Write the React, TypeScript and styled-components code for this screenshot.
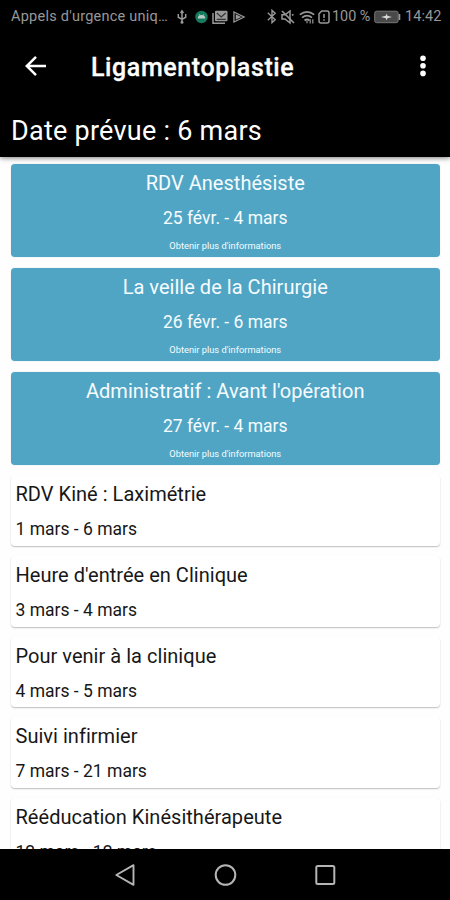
import React from "react";
import styled, { createGlobalStyle } from "styled-components";

const GlobalStyle = createGlobalStyle`
  * { box-sizing: border-box; }
  body { margin: 0; background: #000; font-family: Roboto, sans-serif; }
`;

const Screen = styled.main`
  width: 450px;
  height: 900px;
  display: flex;
  flex-direction: column;
  overflow: hidden;
  background: #fefefe;
`;

const StatusBar = styled.div`
  height: 32px;
  flex: none;
  display: flex;
  align-items: center;
  justify-content: space-between;
  padding: 1px 8px 0 11px;
  background: #000;
  color: #989898;
  font-size: 14.4px;
  line-height: 32px;
  white-space: nowrap;
`;

const StatusGroup = styled.div`
  display: flex;
  align-items: center;
`;

const Carrier = styled.span`
  width: 166px;
  font-size: 14.5px;
  letter-spacing: 0.24px;
`;

const Percent = styled.span`
  width: 42px;
`;

const Clock = styled.span`
  width: 37px;
  letter-spacing: 0.1px;
`;

const Glyph = styled.svg<{ $gap?: number }>`
  display: block;
  flex: none;
  overflow: visible;
  margin-right: ${(p) => p.$gap ?? 0}px;
`;

const AppBar = styled.header`
  height: 72px;
  flex: none;
  display: flex;
  align-items: center;
  padding: 0 18px 2px 23px;
  background: #000;
  color: #fff;
`;

const IconButton = styled.button`
  display: flex;
  padding: 0;
  border: 0;
  background: none;
  color: inherit;
`;

const Title = styled.h1`
  flex: 1;
  margin: 2px 0 0 42px;
  font-size: 25px;
  line-height: 30px;
  font-weight: 500;
  letter-spacing: 0.6px;
  -webkit-text-stroke: 0.3px currentColor;
`;

const PlannedDate = styled.div`
  position: relative;
  height: 53px;
  flex: none;
  padding: 11px 11px 0;
  background: #000;
  color: #fff;
  font-size: 27px;
  line-height: 32px;
  letter-spacing: 0.25px;
  box-shadow: 0 1px 5px rgba(0, 0, 0, 0.5);
`;

const List = styled.section`
  flex: 1;
  min-height: 0;
  overflow: hidden;
  padding: 7px 10px 0 10.5px;
`;

const ActiveCard = styled.article`
  height: 93px;
  margin-bottom: 10.8px;
  border-radius: 4px;
  background: #51a5c4;
  color: #f6fcff;
  text-align: center;
  overflow: hidden;
  box-shadow: 0 0 1px rgba(0, 90, 120, 0.35);
`;

const PlainCard = styled.article`
  height: 70.5px;
  margin-bottom: 10.15px;
  padding: 5px 5px 0;
  border-radius: 4px;
  background: #fff;
  color: #171717;
  box-shadow: 0 1px 1.5px rgba(0, 0, 0, 0.26);
`;

const CardTitle = styled.h2<{ $centered?: boolean }>`
  margin: 0;
  padding-top: ${(p) => (p.$centered ? 7 : 2)}px;
  font-size: 20px;
  line-height: 24px;
  font-weight: 400;
  letter-spacing: 0.03px;
`;

const CardDates = styled.p`
  margin: 11px 0 0;
  font-size: 17.5px;
  line-height: 24px;
`;

const More = styled.div`
  margin-top: 10px;
  font-size: 9.3px;
  line-height: 12px;
`;

const NavBar = styled.nav`
  height: 51px;
  flex: none;
  display: flex;
  align-items: center;
  justify-content: center;
  gap: 78px;
  background: #000;
  color: #b5b5b5;
`;

const activeSteps = [
  { title: "RDV Anesthésiste", dates: "25 févr. - 4 mars" },
  { title: "La veille de la Chirurgie", dates: "26 févr. - 6 mars" },
  { title: "Administratif : Avant l'opération", dates: "27 févr. - 4 mars" },
];

const plannedSteps = [
  { title: "RDV Kiné : Laximétrie", dates: "1 mars - 6 mars" },
  { title: "Heure d'entrée en Clinique", dates: "3 mars - 4 mars" },
  { title: "Pour venir à la clinique", dates: "4 mars - 5 mars" },
  { title: "Suivi infirmier", dates: "7 mars - 21 mars" },
  { title: "Rééducation Kinésithérapeute", dates: "12 mars - 12 mars" },
];

const Usb = () => (
  <Glyph $gap={8} width="10" height="14" viewBox="0 0 10 14" fill="none" stroke="currentColor" strokeWidth="1.5">
    <path d="M5 1v12M1.3 4v3.2L5 9.3l3.7-2.1V4M3.6 3 5 .8 6.4 3" />
    <circle cx="5" cy="12.3" r=".8" />
  </Glyph>
);

const AndroidBadge = () => (
  <Glyph $gap={4} width="13" height="14" viewBox="0 0 14 14">
    <circle cx="7" cy="7" r="6.7" fill="#16795e" />
    <path d="M3 8.5a4 3.7 0 0 1 8 0z" fill="#b7cbc3" />
    <path d="m4.5 4 1 1.5M9.5 4l-1 1.5" stroke="#b7cbc3" strokeWidth=".8" />
  </Glyph>
);

const Gallery = () => (
  <Glyph $gap={5} width="16" height="14" viewBox="0 0 16 14">
    <path d="M1 3v10.2h12" fill="none" stroke="currentColor" strokeWidth="1.5" />
    <rect x="3" y=".8" width="12.5" height="10.5" rx="1" fill="currentColor" />
    <path d="m4.8 3 4.4 4 4.5-4M4.8 9.4h9" fill="none" stroke="#333" strokeWidth="1.2" />
  </Glyph>
);

const Play = () => (
  <Glyph width="12" height="12" viewBox="0 0 13 13">
    <path d="M1 1v11l11-5.5z" fill="none" stroke="currentColor" strokeWidth="1.4" />
    <path d="M3 3.5v6l6-3z" fill="currentColor" />
  </Glyph>
);

const Bluetooth = () => (
  <Glyph $gap={4} width="10" height="15" viewBox="0 0 10 15" fill="none" stroke="currentColor" strokeWidth="1.4">
    <path d="m.8 3.8 7.4 7L5 13.6V1.4l3.2 2.8-7.4 7" />
  </Glyph>
);

const Muted = () => (
  <Glyph $gap={4} width="14" height="14" viewBox="0 0 14 14">
    <path d="M1 4.8h3L9 1v12L4 9H1z" fill="none" stroke="currentColor" strokeWidth="1.5" />
    <path d="m1 1 12 12M11 5.2l1.5-.8" stroke="currentColor" strokeWidth="1.6" />
  </Glyph>
);

const Wifi = () => (
  <Glyph $gap={3} width="16" height="14" viewBox="0 0 16 14" fill="none" stroke="currentColor" strokeWidth="1.7">
    <path d="M.8 4.6Q8-1 15.2 4.6M3 7.7q5-4 10 0M5.5 10.5q2.5-2 5 0" />
    <path d="M8 11v2.2M11.2 9.3v4.2M13.8 9.3v4.2" strokeWidth="1.2" />
  </Glyph>
);

const SimAlert = () => (
  <Glyph $gap={2} width="12" height="14" viewBox="0 0 12 14" fill="none" stroke="currentColor" strokeWidth="1.5">
    <path d="M3.8 1H9a2 2 0 0 1 2 2v8a2 2 0 0 1-2 2H3a2 2 0 0 1-2-2V3.8zM6 4v4M6 9.2v1.6" />
  </Glyph>
);

const Battery = () => (
  <Glyph $gap={4} width="27" height="14" viewBox="0 0 27 14">
    <rect x=".7" y="1.2" width="23.5" height="11.5" rx="2" fill="#494949" stroke="#777" strokeWidth="1" />
    <path d="M25.5 4v6" stroke="currentColor" strokeWidth="1.6" />
    <path d="m7 7 4.8-1.3.8-2.2.8 2.2L18 7l-4.6 1.2-.8 2.3-.8-2.3z" fill="#d8d8d8" />
  </Glyph>
);

export default function App() {
  return (
    <>
      <GlobalStyle />
      <Screen>
        <StatusBar>
          <StatusGroup>
            <Carrier>Appels d'urgence uniq…</Carrier>
            <Usb />
            <AndroidBadge />
            <Gallery />
            <Play />
          </StatusGroup>
          <StatusGroup>
            <Bluetooth />
            <Muted />
            <Wifi />
            <SimAlert />
            <Percent>100 %</Percent>
            <Battery />
            <Clock>14:42</Clock>
          </StatusGroup>
        </StatusBar>
        <AppBar>
          <IconButton aria-label="Retour">
            <Glyph width="26" height="24" viewBox="0 0 26 24" fill="none" stroke="currentColor" strokeWidth="2.5">
              <path d="M23 11H4M13 1.8 3.8 11l9.2 9.2" />
            </Glyph>
          </IconButton>
          <Title>Ligamentoplastie</Title>
          <IconButton aria-label="Options">
            <Glyph width="18" height="24" viewBox="0 0 18 24" fill="currentColor">
              <circle cx="9" cy="3.2" r="2.8" />
              <circle cx="9" cy="10.8" r="2.8" />
              <circle cx="9" cy="18.4" r="2.8" />
            </Glyph>
          </IconButton>
        </AppBar>
        <PlannedDate>Date prévue : 6 mars</PlannedDate>
        <List>
          {activeSteps.map((step) => (
            <ActiveCard key={step.title}>
              <CardTitle $centered>{step.title}</CardTitle>
              <CardDates>{step.dates}</CardDates>
              <More>Obtenir plus d'informations</More>
            </ActiveCard>
          ))}
          {plannedSteps.map((step) => (
            <PlainCard key={step.title}>
              <CardTitle>{step.title}</CardTitle>
              <CardDates>{step.dates}</CardDates>
            </PlainCard>
          ))}
        </List>
        <NavBar>
          <Glyph width="22" height="22" viewBox="0 0 22 22" fill="none" stroke="currentColor" strokeWidth="1.9" strokeLinejoin="round">
            <path d="M19.5 1.2v19.6L2.3 11z" />
          </Glyph>
          <Glyph width="22" height="22" viewBox="0 0 22 22" fill="none" stroke="currentColor" strokeWidth="2">
            <circle cx="11.5" cy="11" r="9.8" />
          </Glyph>
          <Glyph width="22" height="22" viewBox="0 0 22 22" fill="none" stroke="currentColor" strokeWidth="2">
            <rect x="2.3" y="2" width="18" height="18" rx="1.5" />
          </Glyph>
        </NavBar>
      </Screen>
    </>
  );
}
